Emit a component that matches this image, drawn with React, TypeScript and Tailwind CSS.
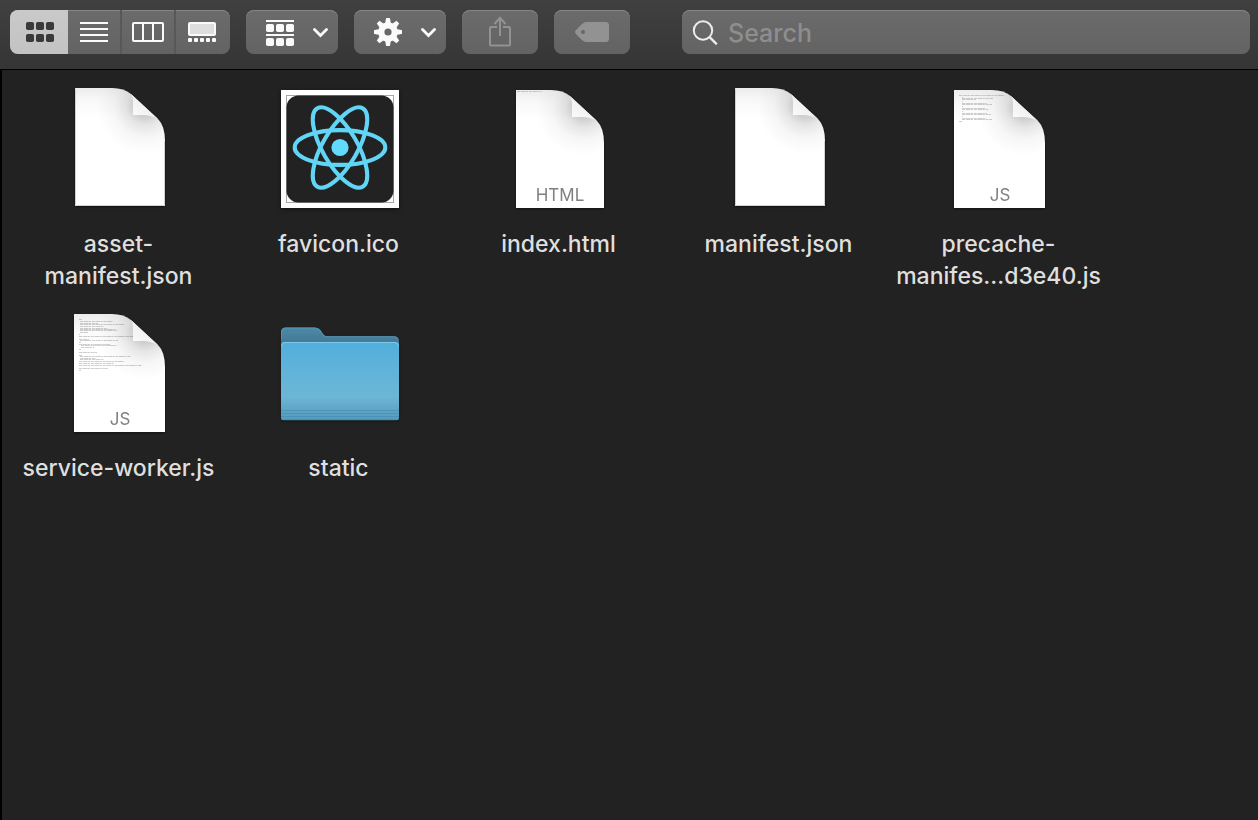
import { useState } from "react";
import type { ReactNode } from "react";

type FileKind = "blank" | "html" | "js" | "image" | "folder";

interface FileEntry {
  id: string;
  lines: string[];
  kind: FileKind;
  code?: number[][];
}

/* Each row is [y, x, length] of one line of miniature source code. */
const PRECACHE_CODE = [
  [7, 19, 45], [9, 22, 1], [10, 22, 31], [11, 22, 14], [13, 22, 1],
  [15, 22, 25], [16, 22, 30], [18, 22, 1], [20, 22, 24], [21, 22, 27],
  [23, 22, 1], [25, 22, 25], [26, 22, 29], [28, 22, 1], [30, 22, 24],
  [31, 22, 30], [33, 19, 3],
];

const WORKER_CODE = [
  [7, 19, 3], [9, 20, 33], [11, 20, 18], [12, 20, 44], [14, 20, 24],
  [16, 20, 28], [17, 20, 36], [18, 20, 37], [20, 20, 8], [22, 19, 1],
  [24, 19, 54], [27, 19, 10], [28, 20, 38], [30, 19, 2], [32, 19, 31],
  [33, 21, 36], [35, 21, 13], [37, 19, 2], [40, 19, 18], [43, 19, 3],
  [44, 20, 51], [46, 20, 16], [47, 20, 24], [49, 19, 45], [51, 19, 35],
  [53, 19, 63], [56, 19, 29], [58, 19, 2],
];

const FILES: FileEntry[] = [
  { id: "asset", lines: ["asset-", "manifest.json"], kind: "blank" },
  { id: "favicon", lines: ["favicon.ico"], kind: "image" },
  { id: "index", lines: ["index.html"], kind: "html", code: [[3, 17, 25]] },
  { id: "manifest", lines: ["manifest.json"], kind: "blank" },
  { id: "precache", lines: ["precache-", "manifes…d3e40.js"], kind: "js", code: PRECACHE_CODE },
  { id: "worker", lines: ["service-worker.js"], kind: "js", code: WORKER_CODE },
  { id: "static", lines: ["static"], kind: "folder" },
];

function DocumentIcon({ id, kind, code = [] }: { id: string; kind: FileKind; code?: number[][] }) {
  const top = kind === "blank" ? 0 : 2;
  const left = kind === "blank" ? 15 : kind === "html" ? 16 : 14;
  const right = kind === "html" ? 104 : 105;
  const fold = kind === "html" ? 72 : 73;
  const outline = `M${left} ${top}H${fold - 21}Q${fold - 9} ${top} ${fold - 2} ${top + 6}L${fold + 25} ${top + 31}Q${right} ${top + 38} ${right} ${top + 53}V${top + 118}H${left}Z`;
  return (
    <svg viewBox="0 0 120 120" className="size-[120px] overflow-visible drop-shadow-[0_1px_1px_rgba(0,0,0,0.45)]" aria-hidden="true">
      <defs>
        <linearGradient id={`${id}-top`} x1="0" y1="0" x2="0" y2="1">
          <stop offset="0" stopColor="#ececec" />
          <stop offset="0.1" stopColor="#f8f8f8" />
          <stop offset="0.25" stopColor="#ffffff" />
        </linearGradient>
        <radialGradient id={`${id}-shade`} gradientUnits="userSpaceOnUse" cx={fold + 12} cy={top + 18} r="48">
          <stop offset="0.2" stopColor="#000" stopOpacity="0.2" />
          <stop offset="0.4" stopColor="#000" stopOpacity="0.1" />
          <stop offset="0.65" stopColor="#000" stopOpacity="0.035" />
          <stop offset="1" stopColor="#000" stopOpacity="0" />
        </radialGradient>
        <linearGradient id={`${id}-fold`} x1="0" y1="1" x2="0.6" y2="0.4">
          <stop offset="0" stopColor="#fdfdfd" />
          <stop offset="1" stopColor="#eeeeee" />
        </linearGradient>
      </defs>
      <path d={outline} fill={`url(#${id}-top)`} />
      {code.map(([y, x, length]) => (
        <path key={y} d={`M${x} ${y + 0.5}h${length}`} stroke="#999999" strokeWidth="0.6" strokeDasharray="3 0.6 5 0.4 2 0.8" opacity="0.8" />
      ))}
      <path d={outline} fill={`url(#${id}-shade)`} />
      {kind === "blank" && (
        <path d={`M${left + 0.5} ${top + 0.5}V${top + 117.5}H${right - 0.5}V${top + 53}`} fill="none" stroke="#c9c5c8" strokeWidth="0.8" />
      )}
      <path
        d={`M${fold - 2} ${top + 6}Q${fold} ${top + 9} ${fold} ${top + 13}V${top + 27}H${fold + 9}Q${fold + 18} ${top + 27} ${fold + 25} ${top + 31}Z`}
        fill={`url(#${id}-fold)`}
      />
      {(kind === "html" || kind === "js") && (
        <text x="60" y="113" textAnchor="middle" fill="#808080" fontSize="17" fontWeight="400" fontFamily="Inter, 'Liberation Sans', sans-serif">
          {kind === "html" ? "HTML" : "JS"}
        </text>
      )}
    </svg>
  );
}

function ReactImageIcon() {
  return (
    <svg viewBox="0 0 120 120" className="size-[120px] overflow-visible drop-shadow-[0_1px_2px_rgba(0,0,0,0.5)]" aria-hidden="true">
      <rect x="1" y="2" width="118" height="118" fill="#fff" />
      <rect x="6.5" y="7.5" width="107" height="107" fill="#fff" stroke="#a8a8a8" />
      <rect x="6.500" y="7.500" width="107" height="107" rx="12" fill="#222" />
      <g fill="none" stroke="#61d5f6" strokeWidth="4.100">
        <ellipse cx="60" cy="59.5" rx="45.3" ry="17.4" />
        <ellipse cx="60" cy="59.5" rx="45.3" ry="17.4" transform="rotate(60 60 59.5)" />
        <ellipse cx="60" cy="59.5" rx="45.3" ry="17.4" transform="rotate(120 60 59.5)" />
      </g>
      <circle cx="60" cy="59.5" r="8.6" fill="#61dafb" />
    </svg>
  );
}

function FolderIcon() {
  return (
    <svg viewBox="0 0 120 120" className="size-[120px] overflow-visible drop-shadow-[0_1px_1px_rgba(0,0,0,0.5)]" aria-hidden="true">
      <defs>
        <linearGradient id="folder-back" x1="0" y1="0" x2="0" y2="1">
          <stop offset="0" stopColor="#4c8aa8" />
          <stop offset="0.5" stopColor="#457c97" />
          <stop offset="1" stopColor="#3f7089" />
        </linearGradient>
        <linearGradient id="folder-front" x1="0" y1="0" x2="0" y2="1">
          <stop offset="0" stopColor="#52afdc" />
          <stop offset="0.35" stopColor="#60b3d9" />
          <stop offset="0.7" stopColor="#6cb6d6" />
          <stop offset="0.87" stopColor="#5ea5c6" />
          <stop offset="1" stopColor="#4f9cc2" />
        </linearGradient>
      </defs>
      <path d="M1 40V20q0-4.500 4.500-4.500H35q3.500 0 5.500 2.500l3 4.500q1.300 1.700 3.500 1.700h67q5 0 5 5V40z" fill="url(#folder-back)" />
      <path d="M1.500 27V20q0-4 4-4H35q3 0 5 2.500l3 4.300q1.500 1.900 4 1.900h67q3.500 0 4.300 3" fill="none" stroke="#5998b8" strokeWidth="0.8" />
      <path d="M1 33.500q0-3.500 3.500-3.500h111q3.500 0 3.500 3.500V106q0 2.300-2.300 2.300H3.300Q1 108.300 1 106z" fill="url(#folder-front)" />
      <path d="M1.500 34q0-3.500 3.500-3.500h110q3.500 0 3.500 3.500" fill="none" stroke="#7cc9ec" />
      <path d="M1 98.500h118M1 101.500h118M1 104.500h118" stroke="#4589aa" strokeWidth="1" opacity="0.55" />
      <path d="M3 107.500h114" stroke="#3f8db4" strokeWidth="1.200" opacity="0.6" />
    </svg>
  );
}

function FileIcon({ file }: { file: FileEntry }) {
  if (file.kind === "image") return <ReactImageIcon />;
  if (file.kind === "folder") return <FolderIcon />;
  return <DocumentIcon id={file.id} kind={file.kind} code={file.code} />;
}

function GridIcon() {
  return (
    <svg viewBox="0 0 28 20" className="h-5 w-7" fill="currentColor" aria-hidden="true">
      {[0, 12].map((y) => [0, 10, 20].map((x) => <rect key={`${x}-${y}`} x={x} y={y} width="8" height="8" rx="1.800" />))}
    </svg>
  );
}

function ListIcon() {
  return (
    <svg viewBox="0 0 28 20" className="h-5 w-7" fill="none" stroke="currentColor" strokeWidth="2" aria-hidden="true">
      <path d="M0 1h28M0 7h28M0 13h28M0 19h28" />
    </svg>
  );
}

function ColumnsIcon() {
  return (
    <svg viewBox="0 0 32 20" className="h-5 w-8" fill="none" stroke="currentColor" strokeWidth="2" aria-hidden="true">
      <rect x="1" y="1" width="30" height="18" rx="1" />
      <path d="M11 1v18M21 1v18" />
    </svg>
  );
}

function GalleryIcon() {
  return (
    <svg viewBox="0 0 28 20" className="h-5 w-7" fill="currentColor" aria-hidden="true">
      <rect x="1" y="1" width="26" height="12" rx="1" fill="#dedede" stroke="currentColor" strokeWidth="2" />
      {[0, 6, 12, 18, 24].map((x) => <rect key={x} x={x} y="16" width="4" height="4" rx="1" />)}
    </svg>
  );
}

function GroupIcon() {
  return (
    <svg viewBox="0 0 28 28" className="size-7" fill="currentColor" aria-hidden="true">
      <path d="M0 2h28v2H0zM0 16h28v2H0z" />
      {[6, 20].map((y) => [0, 10, 20].map((x) => <rect key={`${x}-${y}`} x={x} y={y} width="8" height="8" rx="1.800" />))}
    </svg>
  );
}

function GearIcon() {
  return (
    <svg viewBox="0 0 28 28" className="size-7" aria-hidden="true">
      <g fill="currentColor">
        {[0, 45, 90, 135].map((angle) => (
          <path key={angle} d="M12 0.400q0-.4.400-.4h3.200q.4 0 .4.400L17 6v16l-1 5.600q0 .4-.4.400h-3.200q-.4 0-.4-.4L11 22V6z" transform={`rotate(${angle} 14 14)`} />
        ))}
        <circle cx="14" cy="14" r="9.800" />
      </g>
      <circle cx="14" cy="14" r="3.600" fill="#676767" />
    </svg>
  );
}

function Chevron() {
  return (
    <svg viewBox="0 0 16 12" className="h-3 w-4" fill="none" stroke="currentColor" strokeWidth="2.800" strokeLinecap="round" strokeLinejoin="miter" aria-hidden="true">
      <path d="M2.500 3.500l6 6 6-6" />
    </svg>
  );
}

function ShareIcon() {
  return (
    <svg viewBox="0 0 24 32" className="h-8 w-6" fill="none" stroke="currentColor" strokeWidth="2" aria-hidden="true">
      <path d="M9 11H3q-1 0-1 1v16.500q0 1 1 1h18q1 0 1-1V12q0-1-1-1h-6" />
      <path d="M12 20V2M6.500 8L12 1.800 17.500 8" />
    </svg>
  );
}

function TagIcon() {
  return (
    <svg viewBox="0 0 34 20" className="h-5 w-[34px]" aria-hidden="true">
      <path fillRule="evenodd" fill="currentColor" d="M0 10Q0 9 1 8L7 2Q9 0 11.500 0H30.500Q34 0 34 3.500V16.500Q34 20 30.500 20H11.500Q9 20 7 18L1 12Q0 11 0 10ZM10 10a2 2 0 1 0-4 0a2 2 0 1 0 4 0Z" />
    </svg>
  );
}

const VIEWS: { name: string; icon: ReactNode; style: string }[] = [
  { name: "Icon view", icon: <GridIcon />, style: "w-[58px] pl-0.5" },
  { name: "List view", icon: <ListIcon />, style: "w-[52px]" },
  { name: "Column view", icon: <ColumnsIcon />, style: "w-[54px] border-l-2 border-[#585858]" },
  { name: "Gallery view", icon: <GalleryIcon />, style: "w-14 border-l-2 border-[#585858] pr-0.5" },
];

const SURFACE = "h-11 rounded-lg bg-linear-to-b from-[#6b6b6b] to-[#636363] shadow-[inset_0_1px_0_#858585]";

export default function App() {
  const [view, setView] = useState("Icon view");
  const [query, setQuery] = useState("");

  return (
    <div className="flex min-h-screen flex-col bg-[#222222] font-['Inter','Liberation_Sans',sans-serif]">
      <header className="flex items-start gap-4 border-b border-black bg-linear-to-b from-[#404040] to-[#353535] pt-2.5 pr-2 pb-[15px] pl-2.5 text-[#fafafa]">
        <div role="group" aria-label="View" className={`flex shrink-0 overflow-hidden ${SURFACE}`}>
          {VIEWS.map(({ name, icon, style }) => (
            <button
              key={name}
              type="button"
              aria-label={name}
              aria-pressed={view === name}
              onClick={() => setView(name)}
              className={`flex items-center justify-center ${style} ${view === name ? "bg-linear-to-b from-[#c9c9c9] to-[#c3c3c3] text-[#3a3a3a]" : ""}`}
            >
              {icon}
            </button>
          ))}
        </div>
        <button type="button" aria-label="Group items" className={`flex w-[92px] shrink-0 items-center gap-[18px] pl-5 ${SURFACE}`}>
          <GroupIcon />
          <Chevron />
        </button>
        <button type="button" aria-label="Actions" className={`flex w-[92px] shrink-0 items-center gap-[18px] pl-5 ${SURFACE}`}>
          <GearIcon />
          <Chevron />
        </button>
        <button type="button" aria-label="Share" disabled className={`flex w-[76px] shrink-0 items-center justify-center text-[#929292] ${SURFACE}`}>
          <ShareIcon />
        </button>
        <button type="button" aria-label="Edit tags" disabled className={`flex w-[76px] shrink-0 items-center justify-center text-[#929292] ${SURFACE}`}>
          <TagIcon />
        </button>
        <label className={`ml-9 flex min-w-0 flex-1 items-center gap-2.5 px-2.5 ${SURFACE}`}>
          <svg viewBox="0 0 26 26" className="size-[26px] shrink-0" fill="none" stroke="#ececec" strokeWidth="2" aria-hidden="true">
            <circle cx="11" cy="11.500" r="9.200" />
            <path d="M17.600 18.100l7.200 7.200" strokeWidth="2.400" />
          </svg>
          <input
            type="text"
            aria-label="Search"
            placeholder="Search"
            value={query}
            onChange={(event) => setQuery(event.target.value)}
            className="w-full min-w-0 bg-transparent pt-0.5 text-[25px] leading-8 font-medium text-white outline-none placeholder:text-[#8e8e8e]"
          />
        </label>
      </header>
      <main className="flex-1 border-l-2 border-black px-2 py-[18px]">
        <ul className="grid grid-cols-[repeat(auto-fill,220px)] gap-y-5">
          {FILES.map((file) => (
            <li key={file.id}>
              <button type="button" className="flex w-full flex-col items-center gap-5">
                <FileIcon file={file} />
                <span className="pr-[3px] text-[23px] leading-8 font-medium text-[#dfdfdf]">
                  {file.lines.map((line) => (
                    <span key={line} className="block whitespace-nowrap">{line}</span>
                  ))}
                </span>
              </button>
            </li>
          ))}
        </ul>
      </main>
    </div>
  );
}
